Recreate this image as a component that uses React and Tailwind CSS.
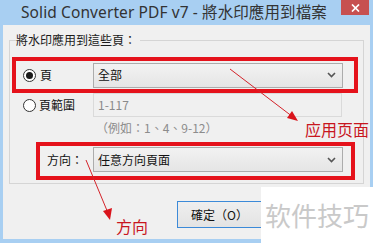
import React from "react";

const ui = { fontFamily: '"Noto Sans", "Noto Sans CJK TC", sans-serif' };
const cjk = { fontFamily: '"Noto Sans CJK TC", "Noto Sans", sans-serif' };
const note = { fontFamily: '"Noto Sans CJK SC", sans-serif' };

function Radio({ checked }) {
  return (
    <span className="w-[13px] h-[13px] rounded-full border border-[#333] bg-white flex items-center justify-center shrink-0">
      {checked && <span className="w-[7px] h-[7px] rounded-full bg-[#1a1a1a]" />}
    </span>
  );
}

function Combo({ value }) {
  return (
    <div className="w-[250px] h-[25px] border border-[#acacac] bg-gradient-to-b from-[#f2f2f2] to-[#e5e5e5] flex items-center justify-between pl-[4px] pr-[6px]">
      <span className="text-[12px] text-[#111]">{value}</span>
      <svg width="9" height="6" viewBox="0 0 9 6">
        <path d="M1 1 L4.5 4.5 L8 1" fill="none" stroke="#555" strokeWidth="1.6" />
      </svg>
    </div>
  );
}

export default function App() {
  return (
    <div className="w-[373px] h-[243px] bg-[#a8cff2] flex flex-col relative overflow-hidden" style={cjk}>
      {/* title bar */}
      <div className="h-[25px] flex items-center pl-[21px] shrink-0">
        <span className="text-[15.5px] text-[#333] leading-none whitespace-nowrap tracking-[0.1px]" style={ui}>
          Solid Converter PDF v7 - 將水印應用到檔案
        </span>
      </div>
      <div className="absolute top-0 left-[341px] w-[28px] h-[15px] bg-[#c75050] flex items-center justify-center">
        <svg width="9" height="8" viewBox="0 0 9 8">
          <path d="M1 0.5 L8 7.5 M8 0.5 L1 7.5" stroke="#fff" strokeWidth="1.7" />
        </svg>
      </div>

      {/* client */}
      <div className="mx-[3px] mb-[4px] flex-1 bg-[#f0f0f0] flex flex-col">
        <div className="mt-[15px] mx-[6px] h-[144px] border border-[#d5d5d5] relative">
          <div className="absolute -top-[8px] left-[6px] bg-[#f0f0f0] pr-[4px] text-[12px] leading-[14px] text-[#1a1a1a]">
            將水印應用到這些頁：
          </div>

          <div className="mt-[16px] ml-[2px] w-[346px] h-[36px] border-[4px] border-[#e5121b] flex items-center">
            <div className="w-[77px] pl-[7px] flex items-center gap-[4px]">
              <Radio checked />
              <span className="text-[12px] text-[#111]">頁</span>
            </div>
            <Combo value="全部" />
          </div>

          <div className="flex items-center h-[24px]">
            <div className="w-[83px] pl-[13px] flex items-center gap-[3px]">
              <Radio />
              <span className="text-[12px] text-[#111]">頁範圍</span>
            </div>
            <div className="w-[249px] h-[24px] border border-[#dadada] bg-[#f0f0f0] flex items-center pl-[4px]">
              <span className="text-[12px] text-[#8a8a8a]">1-117</span>
            </div>
          </div>

          <div className="ml-[86px] mt-[2px] h-[18px] text-[12px] text-[#8c8c8c] leading-[18px]">（例如：1、4、9-12）</div>

          <div className="mt-[5px] ml-[26px] w-[319px] h-[38px] border-[4px] border-[#e5121b] flex items-start pt-[1px]">
            <div className="w-[53px] pl-[7px] h-[25px] flex items-center">
              <span className="text-[12px] text-[#111]">方向：</span>
            </div>
            <Combo value="任意方向頁面" />
          </div>
        </div>

        <div className="mt-[17px] ml-[174px] w-[85px] h-[27px] border border-[#3c8ad8] bg-gradient-to-b from-[#efefef] to-[#e3e3e3] flex items-center justify-center">
          <span className="text-[12px] text-[#111]">確定（O）</span>
        </div>
      </div>

      {/* watermark */}
      <div className="absolute left-[261px] top-[187px] w-[112px] h-[56px] bg-white flex items-center pl-[4px]">
        <span className="text-[26px] text-[#c9c9c9] leading-none whitespace-nowrap" style={note}>软件技巧</span>
      </div>

      {/* annotations */}
      <span className="absolute left-[305px] top-[121px] text-[16px] leading-none text-[#c8161e] whitespace-nowrap" style={note}>应用页面</span>
      <span className="absolute left-[116px] top-[218px] text-[16px] leading-none text-[#c8161e] whitespace-nowrap" style={note}>方向</span>
      <svg className="absolute inset-0" width="373" height="243" viewBox="0 0 373 243">
        <line x1="230" y1="69" x2="293" y2="117" stroke="#d4232a" strokeWidth="1" />
        <path d="M298 121 L287 118 L292 111 Z" fill="#d9141c" />
        <line x1="86" y1="160" x2="108" y2="213" stroke="#d4232a" strokeWidth="1" />
        <path d="M110 220 L103 211 L112 208 Z" fill="#d9141c" />
      </svg>
    </div>
  );
}
